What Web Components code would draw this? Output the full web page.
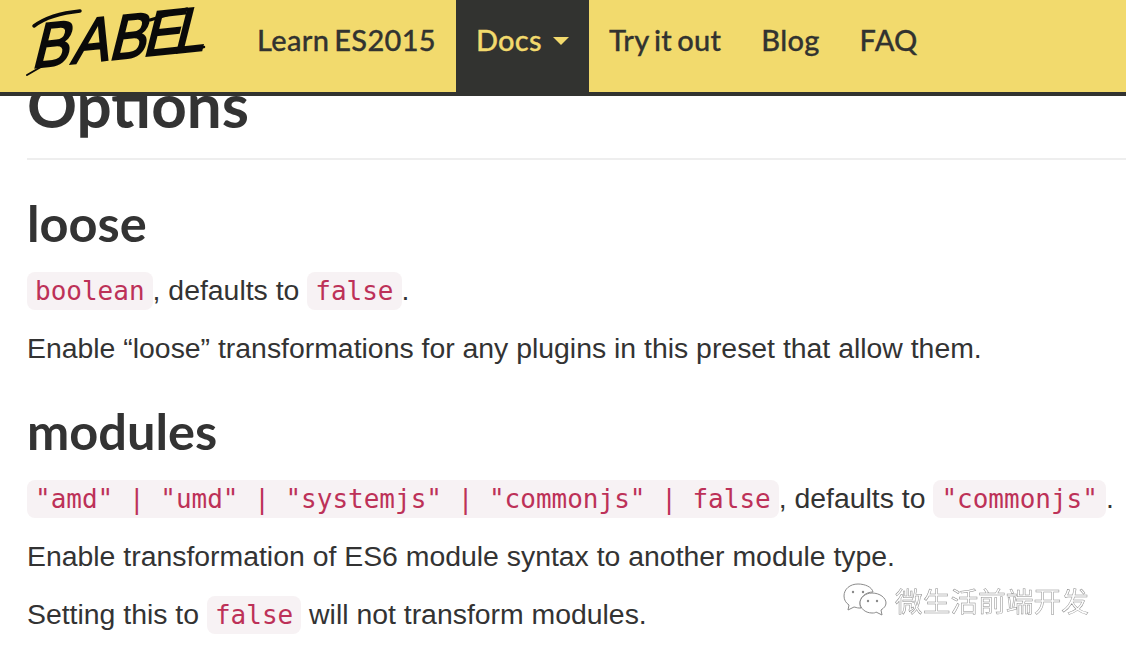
<!DOCTYPE html>
<html>
<head>
<meta charset="utf-8">
<style>
  html, body { margin: 0; height: 100%; overflow: hidden; background: #fff; }
  body { position: relative; font-family: "Liberation Sans", Arial, sans-serif; color: #333; }
</style>
</head>
<body>
<babel-nav>
  <nav-item>Learn ES2015</nav-item>
  <nav-item active caret>Docs</nav-item>
  <nav-item>Try it out</nav-item>
  <nav-item>Blog</nav-item>
  <nav-item>FAQ</nav-item>
</babel-nav>
<doc-page>
  <doc-title>Options</doc-title>
  <doc-section name="loose">
    <doc-para><code-chip>boolean</code-chip>, defaults to <code-chip>false</code-chip>.</doc-para>
    <doc-para>Enable “loose” transformations for any plugins in this preset that allow them.</doc-para>
  </doc-section>
  <doc-section name="modules">
    <doc-para><code-chip>"amd" | "umd" | "systemjs" | "commonjs" | false</code-chip>, defaults to <code-chip>"commonjs"</code-chip>.</doc-para>
    <doc-para>Enable transformation of ES6 module syntax to another module type.</doc-para>
    <doc-para>Setting this to <code-chip>false</code-chip> will not transform modules.</doc-para>
  </doc-section>
</doc-page>
<wechat-mark>微生活前端开发</wechat-mark>
<script>
(function() {
  class BabelNav extends HTMLElement {
    constructor() {
      super();
      this.attachShadow({ mode: 'open' }).innerHTML = `
        <style>
          :host { display: flex; height: 92px; background: #f2da6d; border-bottom: 4px solid #323330; position: relative; z-index: 2; }
          .logo { width: 237px; flex: none; display: flex; }
          .logo svg { width: 237px; height: 92px; overflow: visible; }
          .logo text { font-family: "Liberation Sans Narrow", "Liberation Sans", sans-serif; font-size: 62px; fill: #0a0a0a; stroke: #0a0a0a; stroke-width: 2.2; }
          .links { display: flex; }
        </style>
        <div class="logo">
          <svg viewBox="0 0 237 92">
            <text x="0 44 86 124 158" y="0" transform="translate(31 68) rotate(-6) skewX(-20) scale(.9 1)">BABEL</text>
            <g stroke="#0a0a0a" fill="none" stroke-linecap="round">
              <path d="M34 26 Q50 14 80 11" stroke-width="3.5"/>
              <path d="M27 75 L46 64" stroke-width="2"/>
              <path d="M172 52 L204 47" stroke-width="2.5"/>
              <path d="M150 20 L187 9" stroke-width="3"/>
            </g>
          </svg>
        </div>
        <div class="links"><slot></slot></div>
      `;
    }
  }
  customElements.define('babel-nav', BabelNav);

  class NavItem extends HTMLElement {
    constructor() {
      super();
      this.attachShadow({ mode: 'open' }).innerHTML = `
        <style>
          :host { display: flex; align-items: center; gap: 11px; height: 92px; padding: 0 20px 14px; box-sizing: border-box; font-family: Lato, sans-serif; font-size: 29px; font-weight: 500; color: #323330; letter-spacing: .3px; word-spacing: -2.5px; white-space: nowrap; -webkit-text-stroke: .3px currentColor; }
          :host([active]) { background: #323330; color: #f2da6d; }
          .caret { display: none; width: 0; height: 0; border: 8px solid transparent; border-top-color: currentColor; border-bottom: 0; margin-top: 4px; }
          :host([caret]) .caret { display: block; }
        </style>
        <slot></slot><span class="caret"></span>
      `;
    }
  }
  customElements.define('nav-item', NavItem);

  class DocPage extends HTMLElement {
    constructor() {
      super();
      this.attachShadow({ mode: 'open' }).innerHTML = `
        <style>
          :host { display: block; padding-left: 27px; }
        </style>
        <slot></slot>
      `;
    }
  }
  customElements.define('doc-page', DocPage);

  class DocTitle extends HTMLElement {
    constructor() {
      super();
      this.attachShadow({ mode: 'open' }).innerHTML = `
        <style>
          :host { display: block; margin-top: -17px; height: 79px; border-bottom: 2px solid #eee; font-family: Lato, sans-serif; font-weight: 700; font-size: 62px; line-height: 50px; color: #333; }
        </style>
        <slot></slot>
      `;
    }
  }
  customElements.define('doc-title', DocTitle);

  class DocSection extends HTMLElement {
    constructor() {
      super();
      this.attachShadow({ mode: 'open' }).innerHTML = `
        <style>
          :host { display: block; }
          h2 { margin: 35px 0 20px; font-family: Lato, sans-serif; font-weight: 700; font-size: 50.5px; line-height: 55px; color: #333; }
        </style>
        <h2></h2>
        <slot></slot>
      `;
    }
    connectedCallback() {
      this.shadowRoot.querySelector('h2').textContent = this.getAttribute('name');
    }
  }
  customElements.define('doc-section', DocSection);

  class DocPara extends HTMLElement {
    constructor() {
      super();
      this.attachShadow({ mode: 'open' }).innerHTML = `
        <style>
          :host { display: block; margin-bottom: 18px; font-size: 28.4px; line-height: 40px; white-space: nowrap; color: #333; }
        </style>
        <slot></slot>
      `;
    }
  }
  customElements.define('doc-para', DocPara);

  class CodeChip extends HTMLElement {
    constructor() {
      super();
      this.attachShadow({ mode: 'open' }).innerHTML = `
        <style>
          :host { display: inline-block; padding: 0 8px; line-height: 38px; background: #f7f2f4; border-radius: 8px; font-family: "DejaVu Sans Mono", monospace; font-size: 26px; color: #bd3158; }
        </style>
        <slot></slot>
      `;
    }
  }
  customElements.define('code-chip', CodeChip);

  class WechatMark extends HTMLElement {
    constructor() {
      super();
      this.attachShadow({ mode: 'open' }).innerHTML = `
        <style>
          :host { position: absolute; left: 842px; top: 580px; z-index: 3; will-change: transform; display: flex; align-items: center; gap: 7px; font-family: "Noto Sans CJK SC", sans-serif; font-size: 27.7px; line-height: 40px; color: #fff; -webkit-text-stroke: .5px #8e8e8e; }
          svg { width: 46px; height: 40px; flex: none; }
          .bubble { fill: #fff; stroke: #8a8a8a; stroke-width: 1; }
        </style>
        <svg viewBox="0 0 46 40">
          <path class="bubble" d="M16 4C8 4 2 9 2 16c0 4 2 7 5 9l-1 5 6-3c1 0 3 1 5 1h2c-1-2-1-3-1-5 0-6 6-11 13-11-1-5-8-8-15-8z"/>
          <path class="bubble" d="M30 13c-7 0-12 5-12 10s5 10 12 10c2 0 3 0 4-1l6 3-1-5c3-2 5-4 5-7 0-5-6-10-14-10z"/>
          <circle cx="11" cy="12" r="1.2" fill="#8a8a8a"/><circle cx="21" cy="12" r="1.2" fill="#8a8a8a"/>
          <circle cx="26" cy="21" r="1.2" fill="#8a8a8a"/><circle cx="35" cy="21" r="1.2" fill="#8a8a8a"/>
        </svg>
        <slot></slot>
      `;
    }
  }
  customElements.define('wechat-mark', WechatMark);
})();
</script>
</body>
</html>
